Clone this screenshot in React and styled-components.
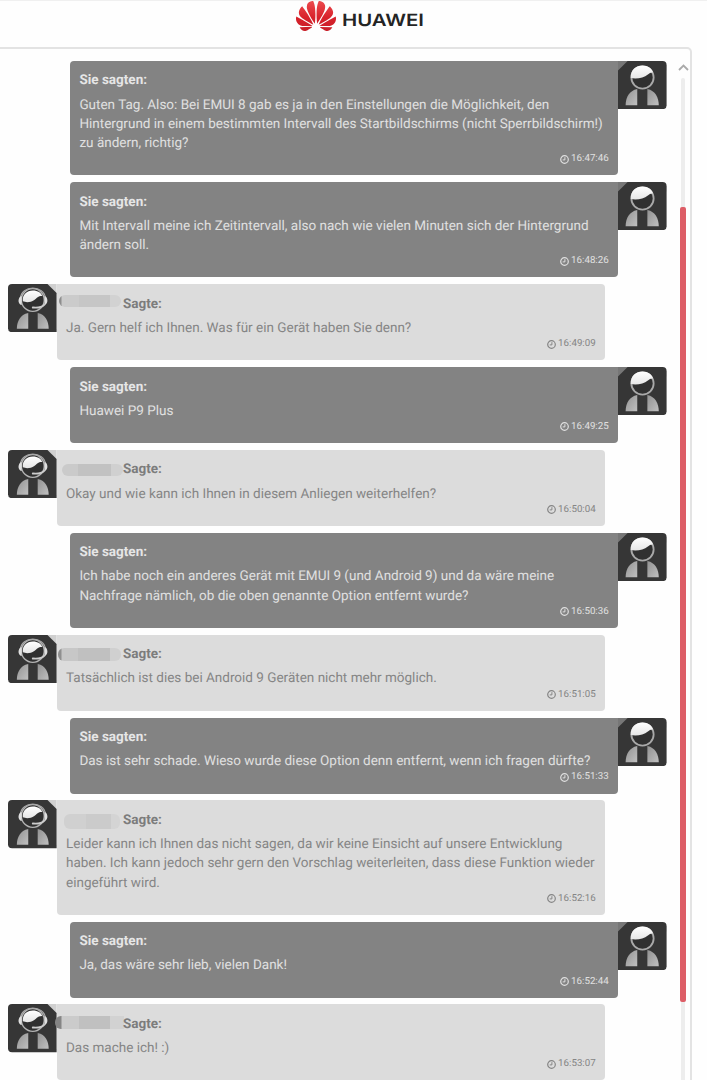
import styled, { createGlobalStyle, css } from "styled-components"
import { SiHuawei } from "react-icons/si"

const GlobalStyle = createGlobalStyle`
* { box-sizing: border-box; }
body {
margin: 0;
background: #fefefe;
font-family: Roboto, sans-serif;
text-rendering: geometricPrecision;
}
`
const Page = styled.div`
width: 707px;
height: 1080px;
overflow: hidden;
display: flex;
flex-direction: column;
border-top: 1px solid #f0f0f0;
`
const Header = styled.header`
display: flex;
align-items: flex-start;
height: 46px;
padding-left: 296px;
flex-shrink: 0;
`
const Flower = styled(SiHuawei)`
width: 40px;
height: 40px;
margin-top: -5px;
margin-right: 6px;
`
const Wordmark = styled.svg`
width: 84px;
height: 20px;
margin-top: 9px;
`
const Panel = styled.main`
width: 692px;
height: 1060px;
flex-shrink: 0;
display: flex;
border: 2px solid #e3e3e3;
border-left: none;
border-top-right-radius: 5px;
background: #fefefe;
`
const Messages = styled.div`
width: 676px;
padding: 11.9px 8px 0 8px;
display: flex;
flex-direction: column;
gap: 6.8px;
`
const Row = styled.div`
display: flex;
align-items: flex-start;
flex-shrink: 0;
margin-left: ${({ $mine }) => ($mine ? "61.6px" : "0")};
`
const Bubble = styled.div`
width: 548.6px;
padding: 10px 9.5px 10.05px ${({ $mine }) => ($mine ? "9.8px" : "9.4px")};
border-radius: 4px;
${({ $mine }) => $mine
    ? css`
background: #838383;
color: #e0e0e0;
border-top-right-radius: 0;
`
    : css`
background: #dcdcdc;
color: #858585;
border-top-left-radius: 0;
`}
`
const Title = styled.div`
display: flex;
align-items: center;
height: 19.2px;
margin-bottom: 5.6px;
font-weight: 700;
font-size: 13.5px;
white-space: pre;
color: ${({ $mine }) => ($mine ? "#e6e6e6" : "#7c7c7c")};
`
const Text = styled.div`
font-size: 13.5px;
line-height: 19.2px;
white-space: pre;
`
const Time = styled.div`
display: flex;
align-items: center;
justify-content: flex-end;
gap: 2px;
height: 12px;
font-size: 9.75px;
line-height: 12px;
`
const ClockIcon = styled.svg`
width: 9px;
height: 9px;
`
// blurred out agent name
const Mask = styled.span`
flex-shrink: 0;
width: ${({ $end, $start }) => $end - $start}px;
height: ${({ $h }) => $h || 12}px;
margin-left: ${({ $start }) => $start}px;
margin-right: ${({ $end }) => 57 - $end}px;
margin-top: ${({ $top }) => $top || 0}px;
border-radius: ${({ $end }) => ($end > 57 ? "6px 0 0 6px" : "6px")};
background: ${({ $bg }) => $bg};
`
const Avatar = styled.svg`
width: 48.6px;
height: 48.2px;
flex-shrink: 0;
`
const Rail = styled.div`
width: 14px;
display: flex;
flex-direction: column;
align-items: center;
padding-top: 15px;
`
const Arrow = styled.svg`
width: 11px;
height: 7px;
margin-bottom: 7px;
flex-shrink: 0;
`
const Track = styled.div`
width: 4px;
flex: 1;
display: flex;
justify-content: center;
background: #ededed;
border-radius: 2px;
`
const Thumb = styled.div`
width: 6px;
height: 795px;
margin-top: 129px;
flex-shrink: 0;
border-radius: 2px;
background: #dd5d66;
`

const edge = "linear-gradient(90deg, #8d8d8d 0 2px, #cbcbcb 3px 20px, #c6c6c6 20px 51px, #d2d2d2 51px)"
const messages = [
    { mine: true, time: "16:47:46", text: "Guten Tag. Also: Bei EMUI 8 gab es ja in den Einstellungen die Möglichkeit, den\nHintergrund in einem bestimmten Intervall des Startbildschirms (nicht Sperrbildschirm!)\nzu ändern, richtig?" },
    { mine: true, time: "16:48:26", text: "Mit Intervall meine ich Zeitintervall, also nach wie vielen Minuten sich der Hintergrund\nändern soll." },
    { time: "16:49:09", text: "Ja. Gern helf ich Ihnen. Was für ein Gerät haben Sie denn?", mask: { $start: -7, $end: 55, $top: -5, $bg: edge } },
    { mine: true, time: "16:49:25", text: "Huawei P9 Plus" },
    { time: "16:50:04", text: "Okay und wie kann ich Ihnen in diesem Anliegen weiterhelfen?", mask: { $start: -4, $end: 57, $top: 2, $bg: "linear-gradient(90deg, #cacaca 0 16px, #c2c2c2 16px 49px, #d0d0d0 49px)" } },
    { mine: true, time: "16:50:36", text: "Ich habe noch ein anderes Gerät mit EMUI 9 (und Android 9) und da wäre meine\nNachfrage nämlich, ob die oben genannte Option entfernt wurde?" },
    { time: "16:51:05", text: "Tatsächlich ist dies bei Android 9 Geräten nicht mehr möglich.", mask: { $start: -8, $end: 55, $top: 0, $h: 13, $bg: "linear-gradient(90deg, #8f8f8f 0 3px, #c7c7c7 4px 20px, #c0c0c0 20px 52px, #d0d0d0 52px)" } },
    { mine: true, time: "16:51:33", text: "Das ist sehr schade. Wieso wurde diese Option denn entfernt, wenn ich fragen dürfte?" },
    { time: "16:52:16", text: "Leider kann ich Ihnen das nicht sagen, da wir keine Einsicht auf unsere Entwicklung\nhaben. Ich kann jedoch sehr gern den Vorschlag weiterleiten, dass diese Funktion wieder\neingeführt wird.", mask: { $start: -2, $end: 54, $top: 3, $h: 15, $bg: "linear-gradient(90deg, #d0d0d0 0 22px, #cbcbcb 22px 47px, #d4d4d4 47px)" } },
    { mine: true, time: "16:52:44", text: "Ja, das wäre sehr lieb, vielen Dank!" },
    { time: "16:53:07", text: "Das mache ich! :)", mask: { $start: -11, $end: 58, $top: -2, $h: 13, $bg: "linear-gradient(90deg, #858585 0 6px, #cbcbcb 7px 24px, #c0c0c0 24px 55px, #d2d2d2 55px)" } },
]

const Defs = () => (
    <svg width="0" height="0" style={{ display: "block" }}>
        <defs>
            <linearGradient id="petal" x1="0" y1="0" x2="0" y2="1">
                <stop offset="0" stopColor="#ec4a4e" />
                <stop offset="0.55" stopColor="#d8222b" />
                <stop offset="1" stopColor="#c8202a" />
            </linearGradient>
            <linearGradient id="coat" x1="0" y1="0" x2="1" y2="1">
                <stop offset="0" stopColor="#929292" />
                <stop offset="1" stopColor="#c0c0c0" />
            </linearGradient>
            <linearGradient id="hair" x1="0" y1="0" x2="0" y2="1">
                <stop offset="0" stopColor="#fff" />
                <stop offset="1" stopColor="#e6e6e6" />
            </linearGradient>
        </defs>
    </svg>
)

const UserAvatar = () => (
    <Avatar viewBox="0 0 48 48" preserveAspectRatio="none">
        <path d="M0 0H10V10H0Z" fill="#777" />
        <path d="M9.500 0H44a4 4 0 0 1 4 4V44a4 4 0 0 1-4 4H0V9.500Z" fill="#363636" />
        <circle cx="24.200" cy="16.500" r="11" fill="#303030" stroke="#a9a9a9" strokeWidth="1.800" />
        <path d="M12.600 17C12.200 8.500 18 4.600 24.200 4.600C29.700 4.600 33.700 7.500 34.600 11.500C32.500 11 31.500 12 29.500 13.500C25.500 16.600 19 18.300 12.600 17Z" fill="url(#hair)" />
        <path d="M19 28V44H7.500C7.700 36.500 11 29.700 19 28Z" fill="url(#coat)" />
        <path d="M29 28V44H40.300C40 36.500 37 29.700 29 28Z" fill="url(#coat)" />
    </Avatar>
)

const AgentAvatar = () => (
    <Avatar viewBox="0 0 48 48" preserveAspectRatio="none">
        <path d="M38 0H48V10Z" fill="#d0d0d0" />
        <path d="M4 0H39L48 9V48H4a4 4 0 0 1-4-4V4a4 4 0 0 1 4-4Z" fill="#363636" />
        <circle cx="24.500" cy="16" r="11.300" fill="#303030" stroke="#b4b4b4" strokeWidth="1.300" />
        <path d="M12.300 14C13 7.500 18.200 4.200 24.500 4.200S36.300 7.500 37 14" fill="none" stroke="#a8a8a8" strokeWidth="1.200" />
        <path d="M14.600 17.300C14 10.500 18.500 6.400 24.500 6.400C29.500 6.400 33 8.700 33.800 12C29.500 11.900 29 14 26 15.900C22.500 18.200 18.500 18.700 14.600 17.300Z" fill="url(#hair)" />
        <path d="M13.500 12C9.800 12.700 9 20 13.500 21ZM36 12C39.700 12.700 40.200 20 36 21Z" fill="#e0e0e0" />
        <path d="M36 20.500C33.500 23.200 30 24 24.500 23.400" fill="none" stroke="#ccc" strokeWidth="1.900" strokeLinecap="round" />
        <path d="M20 28.800V44.500H8.700C8.900 37 12 30.500 20 28.800Z" fill="url(#coat)" />
        <path d="M29.300 28.800V44.500H40.200C40 37 37.300 30.500 29.300 28.800Z" fill="url(#coat)" />
    </Avatar>
)

const Message = ({ item }) => (
    <Row $mine={item.mine}>
        {!item.mine && <AgentAvatar />}
        <Bubble $mine={item.mine}>
            <Title $mine={item.mine}>
                {item.mask && <Mask {...item.mask} />}
                {item.mine ? "Sie sagten:" : "Sagte:"}
            </Title>
            <Text>{item.text}</Text>
            <Time>
                <ClockIcon viewBox="0 0 9 9" fill="none" stroke="currentColor" strokeWidth="1.200">
                    <circle cx="4.500" cy="4.500" r="3.800" />
                    <path d="M4.900 2.200V4.900H2.700" strokeWidth="1" />
                </ClockIcon>
                {item.time}
            </Time>
        </Bubble>
        {item.mine && <UserAvatar />}
    </Row>
)

const App = () => {
    return (
        <Page>
            <GlobalStyle />
            <Defs />
            <Header>
                <Flower style={{ fill: "url(#petal)" }} />
                <Wordmark viewBox="0 0 84 20">
                    <text x="0" y="16" fontFamily="Inter, sans-serif" fontWeight="600" fontSize="17" textLength="82" lengthAdjust="spacingAndGlyphs" fill="#242424">HUAWEI</text>
                </Wordmark>
            </Header>
            <Panel>
                <Messages>
                    {
                        messages.map((item) => (
                            <Message item={item} key={item.time} />
                        ))
                    }
                </Messages>
                <Rail>
                    <Arrow viewBox="0 0 11 7" fill="none" stroke="#aaa" strokeWidth="1.800">
                        <path d="M1 6L5.500 1.500L10 6" />
                    </Arrow>
                    <Track>
                        <Thumb />
                    </Track>
                </Rail>
            </Panel>
        </Page>
    )
}

export default App
